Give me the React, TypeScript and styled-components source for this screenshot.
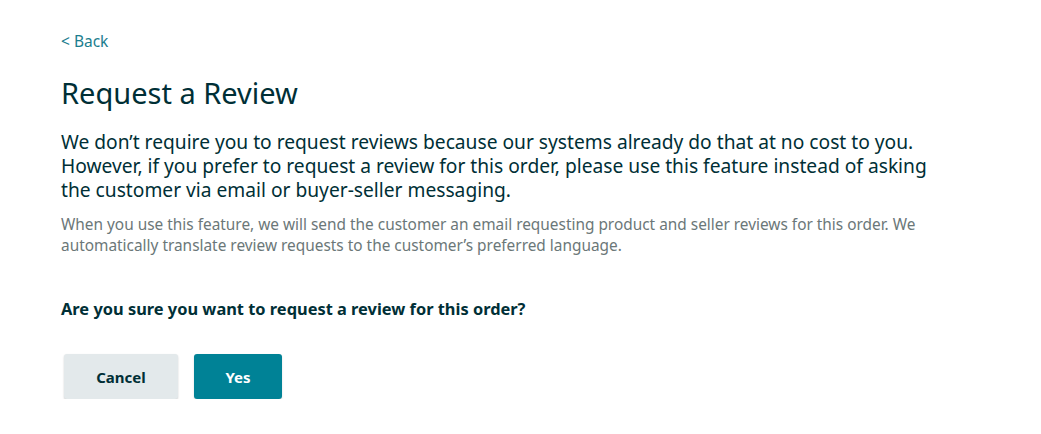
import React from "react";
import styled, { createGlobalStyle } from "styled-components";

const Global = createGlobalStyle`
  html, body { margin: 0; padding: 0; background: #ffffff; }
  body { font-family: "Noto Sans", "Open Sans", Arial, sans-serif; color: #002f36; }
`;

const Page = styled.main`
  padding: 31px 61px 0 61px;
  display: flex;
  flex-direction: column;
  align-items: flex-start;
`;

const BackLink = styled.a`
  font-size: 15.5px;
  line-height: 20px;
  color: #1c7d8e;
  text-decoration: none;
  cursor: pointer;
`;

const Title = styled.h1`
  margin: 24px 0 0 0;
  font-size: 29px;
  line-height: 36px;
  font-weight: 400;
  color: #002f36;
`;

const Lead = styled.p`
  margin: 19px 0 0 0;
  font-size: 19.2px;
  line-height: 24px;
  color: #002f36;
  white-space: nowrap;
`;

const Note = styled.p`
  margin: 12px 0 0 0;
  font-size: 15.4px;
  line-height: 21px;
  color: #6b7778;
  white-space: nowrap;
`;

const Question = styled.p`
  margin: 42px 0 0 0;
  font-size: 16.4px;
  line-height: 22px;
  font-weight: 700;
  color: #002f36;
`;

const Actions = styled.div`
  display: flex;
  gap: 16px;
  margin: 34px 0 0 3px;
`;

const Button = styled.button<{ $primary?: boolean }>`
  height: 45px;
  width: ${(p) => (p.$primary ? "88px" : "114px")};
  padding: 0;
  border: none;
  border-radius: 3px;
  font-family: inherit;
  font-size: 15px;
  font-weight: 700;
  cursor: pointer;
  background: ${(p) => (p.$primary ? "#008296" : "#e3e9eb")};
  color: ${(p) => (p.$primary ? "#ffffff" : "#002f36")};
  box-shadow: ${(p) =>
    p.$primary ? "0 1px 2px rgba(0,0,0,0.15)" : "0 1px 2px rgba(0,0,0,0.2)"};
`;

export default function App() {
  return (
    <>
      <Global />
      <Page>
        <BackLink>&lt; Back</BackLink>
        <Title>Request a Review</Title>
        <Lead>
          We don’t require you to request reviews because our systems already do that at no cost to you.
          <br />
          However, if you prefer to request a review for this order, please use this feature instead of asking
          <br />
          the customer via email or buyer-seller messaging.
        </Lead>
        <Note>
          When you use this feature, we will send the customer an email requesting product and seller reviews for this order. We
          <br />
          automatically translate review requests to the customer’s preferred language.
        </Note>
        <Question>Are you sure you want to request a review for this order?</Question>
        <Actions>
          <Button>Cancel</Button>
          <Button $primary>Yes</Button>
        </Actions>
      </Page>
    </>
  );
}
